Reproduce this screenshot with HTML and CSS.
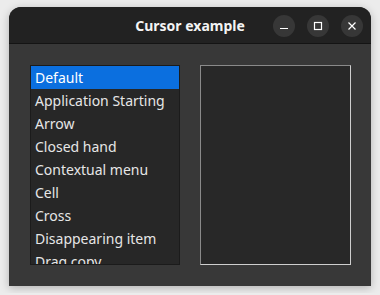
FILE: index.html
```html
<!DOCTYPE html>
<html lang="en">
<head>
    <meta charset="UTF-8">
    <title>Cursor example</title>
    <link rel="stylesheet" href="styles.css">
</head>
<body>
    <div class="window">
        <div class="titlebar">
            <span class="title">Cursor example</span>
            <div class="controls">
                <span class="ctl">
                    <svg width="10" height="10" viewBox="0 0 10 10"><path d="M1 7.5h8" stroke="#fff" stroke-width="1.2"/></svg>
                </span>
                <span class="ctl">
                    <svg width="10" height="10" viewBox="0 0 10 10"><rect x="1.5" y="1.5" width="7" height="7" fill="none" stroke="#fff" stroke-width="1.2"/></svg>
                </span>
                <span class="ctl">
                    <svg width="10" height="10" viewBox="0 0 10 10"><path d="M1.5 1.5l7 7M8.5 1.5l-7 7" stroke="#fff" stroke-width="1.2"/></svg>
                </span>
            </div>
        </div>

        <div class="content">
            <ul class="cursor-list">
                <li class="selected">Default</li>
                <li>Application Starting</li>
                <li>Arrow</li>
                <li>Closed hand</li>
                <li>Contextual menu</li>
                <li>Cell</li>
                <li>Cross</li>
                <li>Disappearing item</li>
                <li>Drag copy</li>
            </ul>
            <div class="preview"></div>
        </div>
    </div>
</body>
</html>
```

FILE: styles.css
```css
body {
    margin: 0;
    padding: 7px 9px;
    background: #ececec;
    font-family: "Noto Sans", "DejaVu Sans", sans-serif;
}

.window {
    width: 362px;
    height: 279px;
    background: #383838;
    border-radius: 12px 12px 0 0;
    box-shadow: 0 2px 8px rgba(0, 0, 0, 0.25);
    overflow: hidden;
}

.titlebar {
    position: relative;
    height: 37px;
    background: #222222;
    border-bottom: 1px solid #141414;
    box-sizing: border-box;
    display: flex;
    align-items: center;
    justify-content: center;
}

.title {
    color: #f4f4f4;
    font-weight: bold;
    font-size: 14px;
}

.controls {
    position: absolute;
    right: 8px;
    top: 8px;
    display: flex;
    gap: 12px;
}

.ctl {
    width: 22px;
    height: 22px;
    border-radius: 50%;
    background: #373737;
    display: flex;
    align-items: center;
    justify-content: center;
}

.content {
    display: flex;
    gap: 19px;
    padding: 21px 0 0 21px;
}

.cursor-list {
    list-style: none;
    margin: 0;
    padding: 0;
    width: 150px;
    height: 200px;
    box-sizing: border-box;
    border: 1px solid #1b1b1b;
    background: #272727;
    overflow: hidden;
}

.cursor-list li {
    height: 23px;
    line-height: 24px;
    padding-left: 4px;
    color: #e6e6e6;
    font-size: 14px;
    white-space: nowrap;
}

.cursor-list li.selected {
    background: #0b6fdf;
    color: #ffffff;
}

.preview {
    margin-left: 1px;
    width: 151px;
    height: 200px;
    box-sizing: border-box;
    background: #282828;
    border: 1px solid #cfcfcf;
    border-top-color: #8a8a8a;
    border-left-color: #8a8a8a;
}
```
